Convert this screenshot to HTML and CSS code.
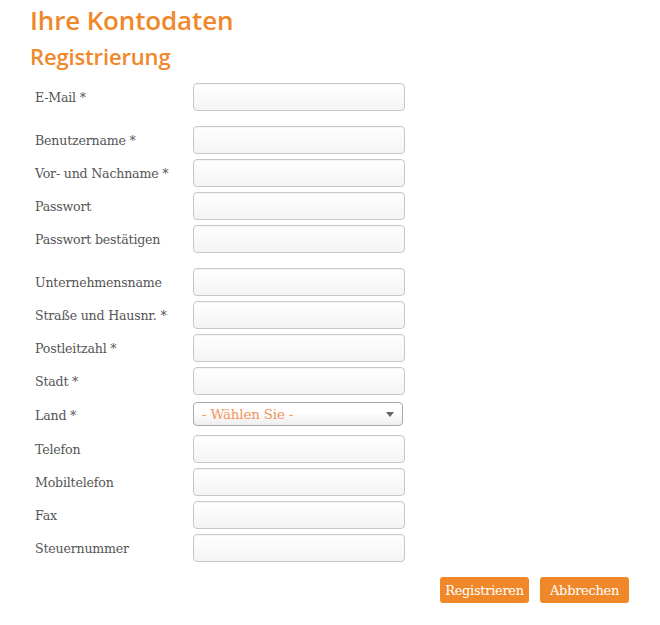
FILE: index.html
```html
<!DOCTYPE html>
<html lang="de">
<head>
<meta charset="utf-8">
<title>Ihre Kontodaten</title>
<link rel="stylesheet" href="styles.css">
</head>
<body>
<div class="page">
  <h1 class="title">Ihre Kontodaten</h1>
  <h2 class="subtitle">Registrierung</h2>
  <form class="form">
    <div class="group">
      <div class="row"><label class="label">E-Mail *</label><input class="field" type="text"></div>
    </div>
    <div class="group">
      <div class="row"><label class="label">Benutzername *</label><input class="field" type="text"></div>
      <div class="row"><label class="label">Vor- und Nachname *</label><input class="field" type="text"></div>
      <div class="row"><label class="label">Passwort</label><input class="field" type="password"></div>
      <div class="row"><label class="label">Passwort bestätigen</label><input class="field" type="password"></div>
    </div>
    <div class="group">
      <div class="row"><label class="label">Unternehmensname</label><input class="field" type="text"></div>
      <div class="row"><label class="label">Straße und Hausnr. *</label><input class="field" type="text"></div>
      <div class="row"><label class="label">Postleitzahl *</label><input class="field" type="text"></div>
      <div class="row"><label class="label">Stadt *</label><input class="field" type="text"></div>
      <div class="row row-select"><label class="label">Land *</label>
        <div class="select"><span class="select-text">- Wählen Sie -</span><span class="select-arrow"></span></div>
      </div>
      <div class="row"><label class="label">Telefon</label><input class="field" type="text"></div>
      <div class="row"><label class="label">Mobiltelefon</label><input class="field" type="text"></div>
      <div class="row"><label class="label">Fax</label><input class="field" type="text"></div>
      <div class="row"><label class="label">Steuernummer</label><input class="field" type="text"></div>
    </div>
    <div class="actions">
      <button class="btn" type="button">Registrieren</button>
      <button class="btn" type="button">Abbrechen</button>
    </div>
  </form>
</div>
</body>
</html>
```

FILE: styles.css
```css
html, body {
  margin: 0;
  padding: 0;
  background: #fff;
}

.page {
  padding: 5px 0 0 30px;
  width: 600px;
}

.title {
  margin: 0;
  font-family: "Open Sans", sans-serif;
  font-weight: 600;
  font-size: 26px;
  line-height: 30px;
  color: #f0882a;
  letter-spacing: -0.15px;
}

.subtitle {
  margin: 8px 0 0 0;
  font-family: "Open Sans", sans-serif;
  font-weight: 600;
  font-size: 22px;
  line-height: 26px;
  color: #f0882a;
  letter-spacing: -0.15px;
}

.form {
  margin: 14px 0 0 5px;
  display: flex;
  flex-direction: column;
  gap: 15px;
}

.group {
  display: flex;
  flex-direction: column;
  gap: 5px;
}

.row {
  display: grid;
  grid-template-columns: 158px 212px;
  align-items: center;
  height: 28px;
}

.row-select {
  height: 30px;
}

.label {
  font-family: "DejaVu Serif", serif;
  font-size: 12.6px;
  color: #555;
  letter-spacing: -0.2px;
}

.field {
  box-sizing: border-box;
  width: 212px;
  height: 28px;
  margin: 0;
  border: 1px solid #c8c8c8;
  border-radius: 4px;
  background: linear-gradient(#ffffff, #f4f4f4);
  box-shadow: inset 0 1px 1px rgba(0,0,0,0.04);
}

.select {
  box-sizing: border-box;
  width: 210px;
  height: 24px;
  border: 1px solid #a9a9a9;
  border-radius: 4px;
  background: linear-gradient(#ffffff 40%, #eeeeee);
  display: flex;
  align-items: center;
  justify-content: space-between;
  padding: 0 8px 0 8px;
  margin-top: -2px;
}

.select-text {
  font-family: "DejaVu Serif", serif;
  font-size: 13.5px;
  color: #f0955a;
  letter-spacing: -0.2px;
}

.select-arrow {
  width: 0;
  height: 0;
  border-left: 4px solid transparent;
  border-right: 4px solid transparent;
  border-top: 5px solid #666;
}

.actions {
  display: flex;
  justify-content: flex-end;
  gap: 11px;
  width: 594px;
}

.btn {
  width: 89px;
  height: 26px;
  padding: 0;
  border: none;
  border-radius: 3px;
  background: #f0882a;
  color: #fff;
  font-family: "DejaVu Serif", serif;
  font-size: 13px;
  letter-spacing: -0.3px;
  cursor: pointer;
}
```
